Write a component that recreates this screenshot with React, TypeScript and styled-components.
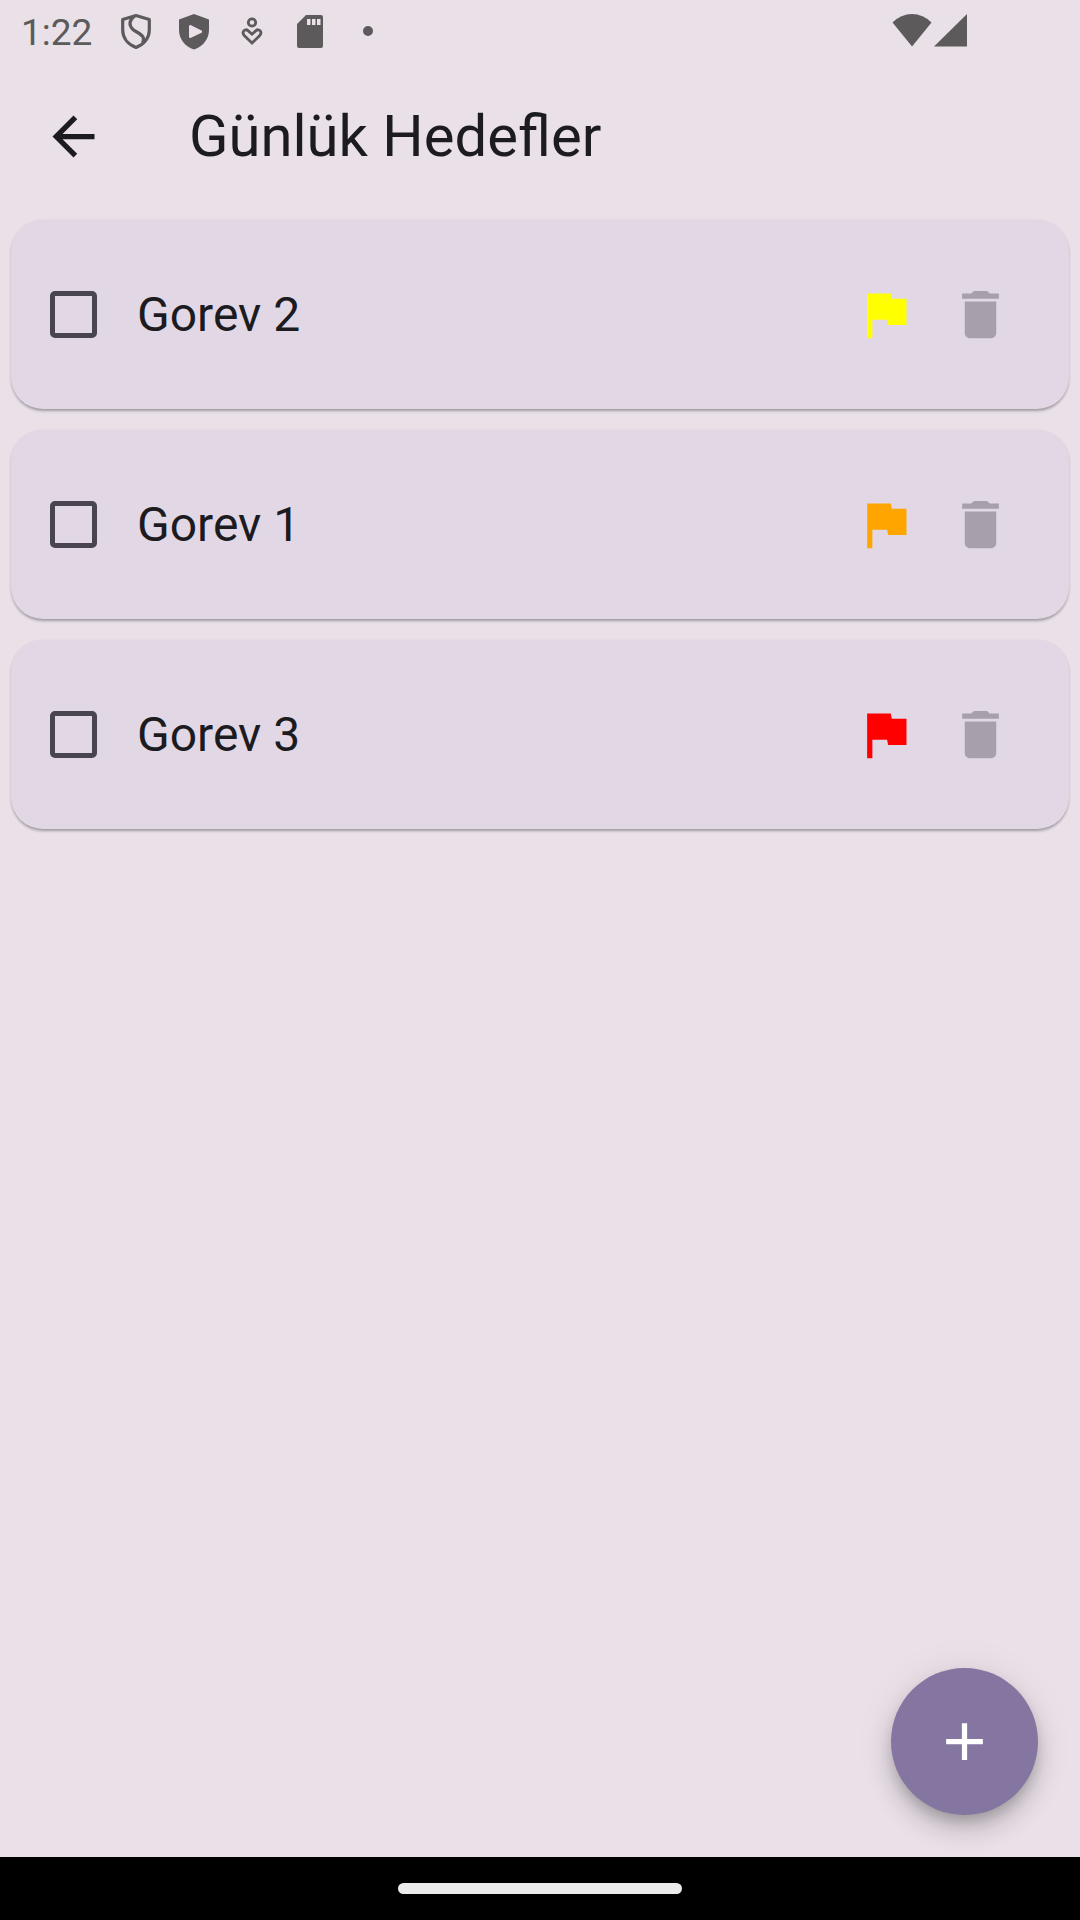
import React, { useState } from "react";
import styled, { createGlobalStyle } from "styled-components";

const GlobalStyle = createGlobalStyle`
  *, *::before, *::after { box-sizing: border-box; }
  body {
    margin: 0;
    background: #eae0e8;
    color: #1c1b1f;
    font-family: Roboto, "Noto Sans", sans-serif;
  }
`;

const Screen = styled.div`
  display: flex;
  flex-direction: column;
  min-height: 100vh;
`;

const StatusBar = styled.div`
  display: flex;
  align-items: center;
  justify-content: space-between;
  height: 62px;
  padding: 0 105px 0 21px;
  color: #5c5a5b;
`;

const StatusGroup = styled.div<{ $gap: number }>`
  display: flex;
  align-items: center;
  gap: ${(p) => p.$gap}px;
`;

const Clock = styled.time`
  width: 78px;
  padding-top: 4px;
  font-size: 37px;
  line-height: 46px;
  white-space: nowrap;
`;

const StatusIcon = styled.svg`
  display: block;
  width: 42px;
  height: 42px;
  fill: currentColor;
`;

const AppBar = styled.header`
  display: flex;
  align-items: center;
  height: 148px;
  padding: 0 42px 0 10px;
  gap: 53px;
`;

const Title = styled.h1`
  margin: 0;
  font-size: 58px;
  font-weight: 400;
  line-height: 70px;
`;

const IconButton = styled.button<{ $color: string }>`
  display: flex;
  align-items: center;
  justify-content: center;
  width: 126px;
  height: 126px;
  padding: 0;
  border: 0;
  border-radius: 50%;
  background: none;
  color: ${(p) => p.$color};
  cursor: pointer;
`;

const Glyph = styled.svg<{ $color?: string }>`
  display: block;
  flex: none;
  width: 63px;
  height: 63px;
  fill: ${(p) => p.$color ?? "currentColor"};
`;

const Goals = styled.ul`
  display: flex;
  flex: 1;
  flex-direction: column;
  gap: 21px;
  margin: 0;
  padding: 10px 11px 21px;
  list-style: none;
`;

const GoalCard = styled.li`
  display: flex;
  align-items: center;
  height: 189px;
  padding-right: 26px;
  border-radius: 32px;
  background: #e2d8e5;
  box-shadow: 0 3px 3px -1px rgba(0, 0, 0, 0.24), 0 1px 3px rgba(0, 0, 0, 0.14);
`;

const GoalLabel = styled.label`
  display: flex;
  flex: 1;
  align-items: center;
  gap: 40px;
  padding-left: 39px;
  font-size: 48px;
  line-height: 70px;
  cursor: pointer;
`;

const Checkbox = styled.input`
  appearance: none;
  flex: none;
  width: 47px;
  height: 47px;
  margin: 0;
  border: 5px solid #49454f;
  border-radius: 5px;
  cursor: pointer;

  &:checked {
    background: #8575a1;
    border-color: #8575a1;
  }
`;

const Actions = styled.div`
  display: flex;
  justify-content: flex-end;
  padding: 0 42px 42px;
`;

const AddButton = styled.button`
  display: flex;
  align-items: center;
  justify-content: center;
  width: 147px;
  height: 147px;
  padding: 0;
  border: 0;
  border-radius: 50%;
  background: #8575a1;
  color: #fff;
  box-shadow: 0 8px 13px -3px rgba(0, 0, 0, 0.2), 0 16px 26px rgba(0, 0, 0, 0.14),
    0 3px 40px rgba(0, 0, 0, 0.08);
  cursor: pointer;
`;

const NavigationBar = styled.footer`
  display: flex;
  align-items: center;
  justify-content: center;
  position: relative;
  height: 63px;
  background: #000;
`;

const HomeHandle = styled.div`
  width: 284px;
  height: 11px;
  border-radius: 6px;
  background: #ebebeb;
`;

const goals = [
  { id: "gorev-2", name: "Gorev 2", flag: "#ffff00" },
  { id: "gorev-1", name: "Gorev 1", flag: "#ffa500" },
  { id: "gorev-3", name: "Gorev 3", flag: "#ff0000" },
];

function StatusIcons() {
  return (
    <>
      <StatusIcon viewBox="0 0 42 42" aria-hidden="true">
        <g fill="none" stroke="currentColor" strokeWidth="3.200" strokeLinejoin="round">
          <path d="M21 5.500 34.300 9.500V20C34.300 28 29 34.500 21 37.500 13 34.500 7.700 28 7.700 20V9.500Z" />
          <path d="M19.500 6C14 10.500 13.500 15 18 19.500 21 22 26 23.500 28 27 29 29 28.500 31 27.500 33" />
        </g>
      </StatusIcon>
      <StatusIcon viewBox="0 0 42 42" aria-hidden="true">
        <path
          fillRule="evenodd"
          d="M21 4 36 9.500V20C36 29 30 36.500 21 39.500 12 36.500 6 29 6 20V9.500ZM16 15.500V27.500L17.500 28 29 22.500V20.800L17.500 15Z"
        />
      </StatusIcon>
      <StatusIcon viewBox="0 0 42 42" aria-hidden="true">
        <g fill="none" stroke="currentColor" strokeWidth="2.800">
          <circle cx="21" cy="12.500" r="3.700" />
          <path d="M21 33 13.500 25.800C10 22 14 18 17 20.600L21 24.200 25 20.600C28 18 32 22 28.500 25.800Z" />
        </g>
      </StatusIcon>
      <StatusIcon viewBox="0 0 42 42" aria-hidden="true">
        <path
          fillRule="evenodd"
          d="M17 5H32Q34 5 34 7V36Q34 38 32 38H10Q8 38 8 36V14ZM18 9V15H21.500V9ZM23 9V15H26.500V9ZM28 9V15H31.500V9Z"
        />
      </StatusIcon>
      <StatusIcon viewBox="0 0 42 42" aria-hidden="true">
        <circle cx="21" cy="21" r="5" />
      </StatusIcon>
    </>
  );
}

export default function App() {
  const [done, setDone] = useState<Record<string, boolean>>({});

  return (
    <Screen>
      <GlobalStyle />
      <StatusBar>
        <StatusGroup $gap={16}>
          <Clock>1:22</Clock>
          <StatusIcons />
        </StatusGroup>
        <StatusGroup $gap={0}>
          <StatusIcon viewBox="0 0 42 42" aria-hidden="true">
            <path d="M21 36.500 1.500 12.500Q10 4 21 4T40.500 12.500Z" />
          </StatusIcon>
          <StatusIcon viewBox="0 0 42 42" aria-hidden="true">
            <path d="M1 36.500 34 4V36.500Z" />
          </StatusIcon>
        </StatusGroup>
      </StatusBar>
      <AppBar>
        <IconButton type="button" $color="#1c1b1f" aria-label="Geri">
          <Glyph viewBox="0 0 24 24">
            <path d="M20 11H7.830l5.590-5.590L12 4l-8 8 8 8 1.410-1.410L7.830 13H20v-2z" />
          </Glyph>
        </IconButton>
        <Title>Günlük Hedefler</Title>
      </AppBar>
      <Goals>
        {goals.map((goal) => (
          <GoalCard key={goal.id}>
            <GoalLabel htmlFor={goal.id}>
              <Checkbox
                type="checkbox"
                id={goal.id}
                checked={!!done[goal.id]}
                onChange={(e) => setDone({ ...done, [goal.id]: e.target.checked })}
              />
              {goal.name}
            </GoalLabel>
            <Glyph viewBox="0 0 24 24" $color={goal.flag} aria-hidden="true">
              <path d="M14.400 6L14 4H5v17h2v-7h5.600l.4 2h7V6z" />
            </Glyph>
            <IconButton type="button" $color="#a79fab" aria-label={`${goal.name} sil`}>
              <Glyph viewBox="0 0 24 24">
                <path d="M6 19c0 1.100.9 2 2 2h8c1.100 0 2-.9 2-2V7H6v12zM19 4h-3.500l-1-1h-5l-1 1H5v2h14V4z" />
              </Glyph>
            </IconButton>
          </GoalCard>
        ))}
      </Goals>
      <Actions>
        <AddButton type="button" aria-label="Ekle">
          <Glyph viewBox="0 0 24 24">
            <path d="M19 13h-6v6h-2v-6H5v-2h6V5h2v6h6v2z" />
          </Glyph>
        </AddButton>
      </Actions>
      <NavigationBar>
        <HomeHandle />
      </NavigationBar>
    </Screen>
  );
}
